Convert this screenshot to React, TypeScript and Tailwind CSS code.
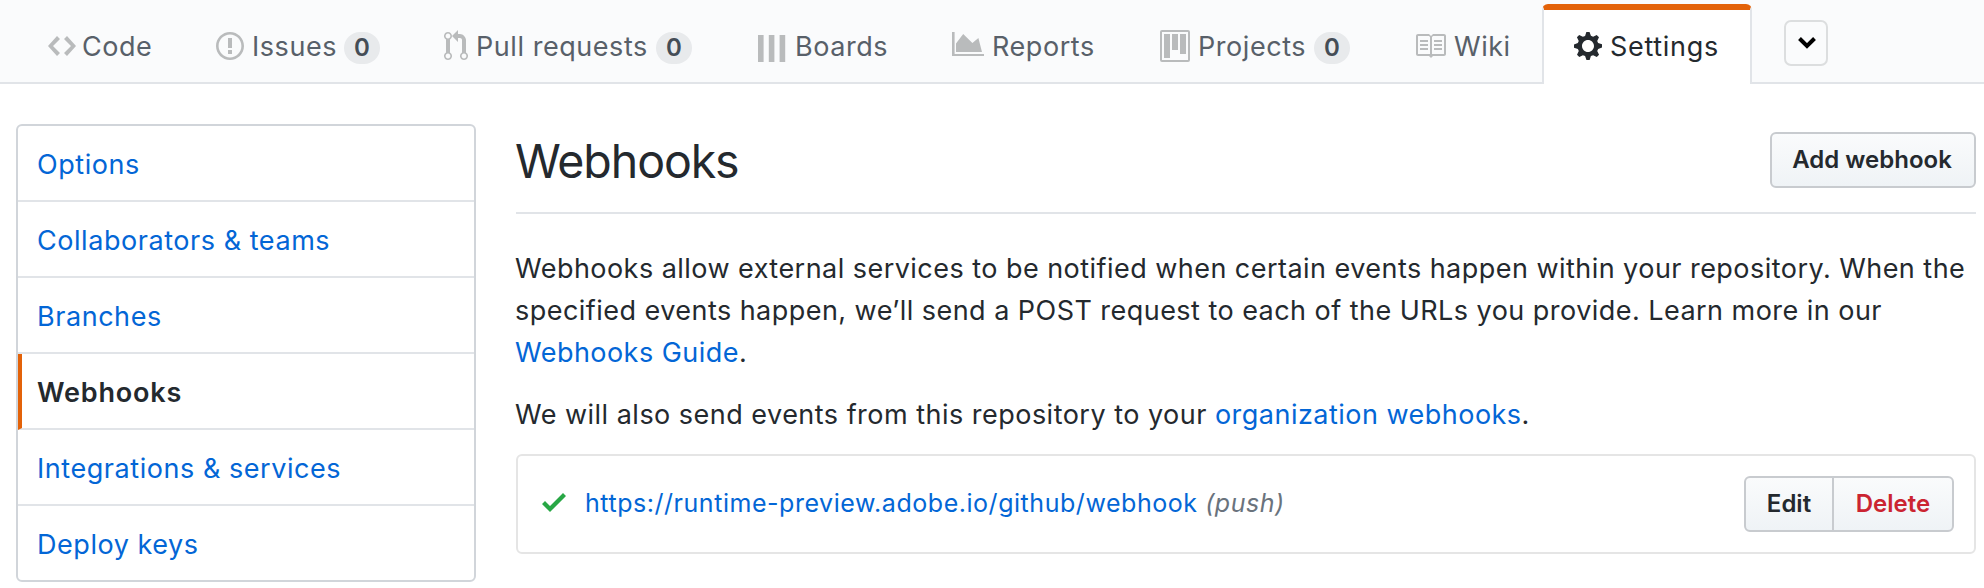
import type { ReactNode } from "react";

function Icon({ w, d, className = "" }: { w: number; d: string; className?: string }) {
  return (
    <svg width={w * 2} height={32} viewBox={`0 0 ${w} 16`} fill="currentColor" fillRule="evenodd" className={`shrink-0 ${className}`}>
      <path d={d} />
    </svg>
  );
}

const paths = {
  code: "M9.5 3L8 4.5 11.5 8 8 11.5 9.5 13 14 8 9.5 3zm-5 0L0 8l4.5 5L6 11.5 2.5 8 6 4.5 4.5 3z",
  issue: "M7 2.3c3.14 0 5.7 2.56 5.7 5.7s-2.56 5.7-5.7 5.7A5.71 5.71 0 0 1 1.3 8c0-3.14 2.56-5.7 5.7-5.7zM7 1C3.14 1 0 4.14 0 8s3.14 7 7 7 7-3.14 7-7-3.14-7-7-7zm1 3H6v5h2V4zm0 6H6v2h2v-2z",
  pull: "M11 11.28V5c-.03-.78-.34-1.47-.94-2.06C9.46 2.35 8.78 2.03 8 2H7V0L4 3l3 3V4h1c.27.02.48.11.69.31.21.2.3.42.31.69v6.28A1.993 1.993 0 0 0 10 15a1.993 1.993 0 0 0 1-3.72zm-1 2.92c-.66 0-1.2-.55-1.2-1.2 0-.65.55-1.2 1.2-1.2.65 0 1.2.55 1.2 1.2 0 .65-.55 1.2-1.2 1.2zM4 3c0-1.11-.89-2-2-2a1.993 1.993 0 0 0-1 3.72v6.56A1.993 1.993 0 0 0 2 15a1.993 1.993 0 0 0 1-3.72V4.72c.59-.34 1-.98 1-1.72zm-.8 10c0 .66-.55 1.2-1.2 1.2-.65 0-1.2-.55-1.2-1.2 0-.65.55-1.2 1.2-1.2.65 0 1.2.55 1.2 1.2zM2 4.2C1.34 4.2.8 3.65.8 3c0-.65.55-1.2 1.2-1.2.65 0 1.2.55 1.2 1.2 0 .65-.55 1.2-1.2 1.2z",
  boards: "M0 2.5h2.8V16H0zM5.4 2.5h2.8V16H5.4zM10.8 2.5h2.8V16h-2.8z",
  reports: "M0 1h1.3v11H16v1H0zM2 11V6.7L5.6 2l4.6 4.5L13.2 4 15 11z",
  project: "M10 12h3V2h-3v10zm-4-2h3V2H6v8zm-4 4h3V2H2v12zm-1 1h13V1H1v14zM14 0H1a1 1 0 0 0-1 1v14a1 1 0 0 0 1 1h13a1 1 0 0 0 1-1V1a1 1 0 0 0-1-1z",
  book: "M3 5h4v1H3V5zm0 3h4V7H3v1zm0 2h4V9H3v1zm11-5h-4v1h4V5zm0 2h-4v1h4V7zm0 2h-4v1h4V9zm2-6v9c0 .55-.45 1-1 1H9.5l-1 1-1-1H2c-.55 0-1-.45-1-1V3c0-.55.45-1 1-1h5.5l1 1 1-1H15c.55 0 1 .45 1 1zm-8 .5L7.5 3H2v9h6V3.5zm7-.5H9.5l-.5.5V12h6V3z",
  gear: "M14 8.77v-1.6l-1.94-.64-.45-1.09.88-1.84-1.13-1.13-1.81.91-1.09-.45-.69-1.92h-1.6l-.63 1.94-1.11.45-1.84-.88-1.13 1.13.91 1.81-.45 1.09L0 7.23v1.59l1.94.64.45 1.09-.88 1.84 1.13 1.13 1.81-.91 1.09.45.69 1.92h1.59l.63-1.94 1.11-.45 1.84.88 1.13-1.13-.92-1.81.47-1.09L14 8.75v.02zM7 11c-1.66 0-3-1.34-3-3s1.34-3 3-3 3 1.34 3 3-1.34 3-3 3z",
  check: "M12 5l-8 8-4-4 1.5-1.5L4 10l6.5-6.5L12 5z",
};

function Tab({ icon, w, width, gap, label, count }: { icon: string; w: number; width: string; gap: string; label: string; count?: number }) {
  return (
    <a className={`flex shrink-0 items-start pt-[30px] text-[#586069] ${width}`}>
      <Icon w={w} d={icon} className="text-[#b9bbbc]" />
      <span className={`leading-[34px] tracking-[0.55px] whitespace-nowrap ${gap}`}>{label}</span>
      {count !== undefined && (
        <span className="mt-0.5 mr-16 ml-auto flex h-8 w-9 shrink-0 items-center justify-center rounded-full bg-[#e8eaec] text-[24px] font-semibold text-[#444d56]">{count}</span>
      )}
    </a>
  );
}

function MenuRow({ children, active = false }: { children: ReactNode; active?: boolean }) {
  return (
    <a className={`flex h-[76px] items-center border-b-2 border-b-[#e1e4e8] pt-1 last:h-[74px] last:border-b-0 ${active ? "border-l-4 border-l-[#e36209] pl-[15px] font-semibold tracking-[0.8px] text-[#24292e]" : "pl-[19px] tracking-[0.55px] text-[#0366d6]"}`}>
      {children}
    </a>
  );
}

const btn = "flex h-14 items-center justify-center border-2 border-[#c8cbcf] bg-linear-to-b from-[#fafbfc] to-[#eff3f6] text-[24px] font-semibold";

export default function App() {
  return (
    <div className="h-[588px] w-[1984px] overflow-hidden bg-white font-['Inter',sans-serif] text-[27px] text-[#24292e]">
      <nav className="flex h-[84px] border-b-2 border-[#e1e4e8] bg-[#fafbfc] pl-12">
        <Tab icon={paths.code} w={14} width="w-[168px]" gap="ml-1.5" label="Code" />
        <Tab icon={paths.issue} w={14} width="w-[228px]" gap="ml-2" label="Issues" count={0} />
        <Tab icon={paths.pull} w={12} width="w-[312px]" gap="ml-2" label="Pull requests" count={0} />
        <Tab icon={paths.boards} w={14} width="w-[194px] ml-0.5" gap="ml-[9px]" label="Boards" />
        <Tab icon={paths.reports} w={16} width="w-[208px]" gap="ml-2" label="Reports" />
        <Tab icon={paths.project} w={15} width="w-[254px]" gap="ml-2" label="Projects" count={0} />
        <Tab icon={paths.book} w={16} width="w-[128px]" gap="ml-2" label="Wiki" />
        <a className="mt-1 flex h-20 w-[210px] shrink-0 items-start rounded-t-[6px] border-x-2 border-t-6 border-x-[#e1e4e8] border-t-[#e36209] bg-white pt-5 pl-[30px]">
          <Icon w={14} d={paths.gear} />
          <span className="ml-2 leading-[34px] tracking-[0.7px]">Settings</span>
        </a>
        <button className="mt-5 ml-8 flex h-[46px] w-11 items-center justify-center rounded-[7px] border-2 border-[#dcdedf]">
          <svg width="18" height="12" viewBox="0 0 18 12" fill="none" stroke="#000" strokeWidth="4" className="ml-0.5">
            <path d="M1.5 1.5 9 9l7.5-7.5" />
          </svg>
        </button>
      </nav>
      <div className="flex pt-10 pl-4">
        <aside className="h-[458px] w-[460px] shrink-0 rounded-[6px] border-2 border-[#d1d5da]">
          <MenuRow>Options</MenuRow>
          <MenuRow>Collaborators &amp; teams</MenuRow>
          <MenuRow>Branches</MenuRow>
          <MenuRow active>Webhooks</MenuRow>
          <MenuRow>Integrations &amp; services</MenuRow>
          <MenuRow>Deploy keys</MenuRow>
        </aside>
        <main className="ml-10 w-[1460px] shrink-0">
          <header className="flex h-[90px] justify-between border-b-2 border-[#e1e4e8]">
            <h1 className="-ml-px text-[46.5px] leading-[74px] tracking-[-1.1px]">Webhooks</h1>
            <button className={`mt-2 w-[206px] rounded-[6px] pr-0.5 ${btn}`}>Add webhook</button>
          </header>
          <p className="mt-[34px] -ml-px leading-[42px] tracking-[0.46px] whitespace-nowrap">
            Webhooks allow external services to be notified when certain events happen within your repository. When the
            <br />
            specified events happen, we’ll send a POST request to each of the URLs you provide. Learn more in our
            <br />
            <a className="text-[#0366d6]">Webhooks Guide</a>.
          </p>
          <p className="mt-5 -ml-px leading-[42px] tracking-[0.48px]">
            We will also send events from this repository to your <a className="text-[#0366d6]">organization webhooks</a>.
          </p>
          <section className="mt-[18px] flex h-[100px] items-start rounded-[6px] border-2 border-[#e5e5e5] pt-5 pr-5 pl-6">
            <Icon w={12} d={paths.check} className="mt-2.5 text-[#28a745]" />
            <p className="mt-px ml-[19px] text-[25px] leading-[52px] tracking-[0.54px]">
              <a className="text-[#0366d6]">https://runtime-preview.adobe.io/github/webhook</a> <em className="text-[#6a737d]">(push)</em>
            </p>
            <div className="ml-auto flex">
              <button className={`w-[90px] rounded-l-[6px] ${btn}`}>Edit</button>
              <button className={`-ml-0.5 w-[122px] rounded-r-[6px] text-[#cb2431] ${btn}`}>Delete</button>
            </div>
          </section>
        </main>
      </div>
    </div>
  );
}
